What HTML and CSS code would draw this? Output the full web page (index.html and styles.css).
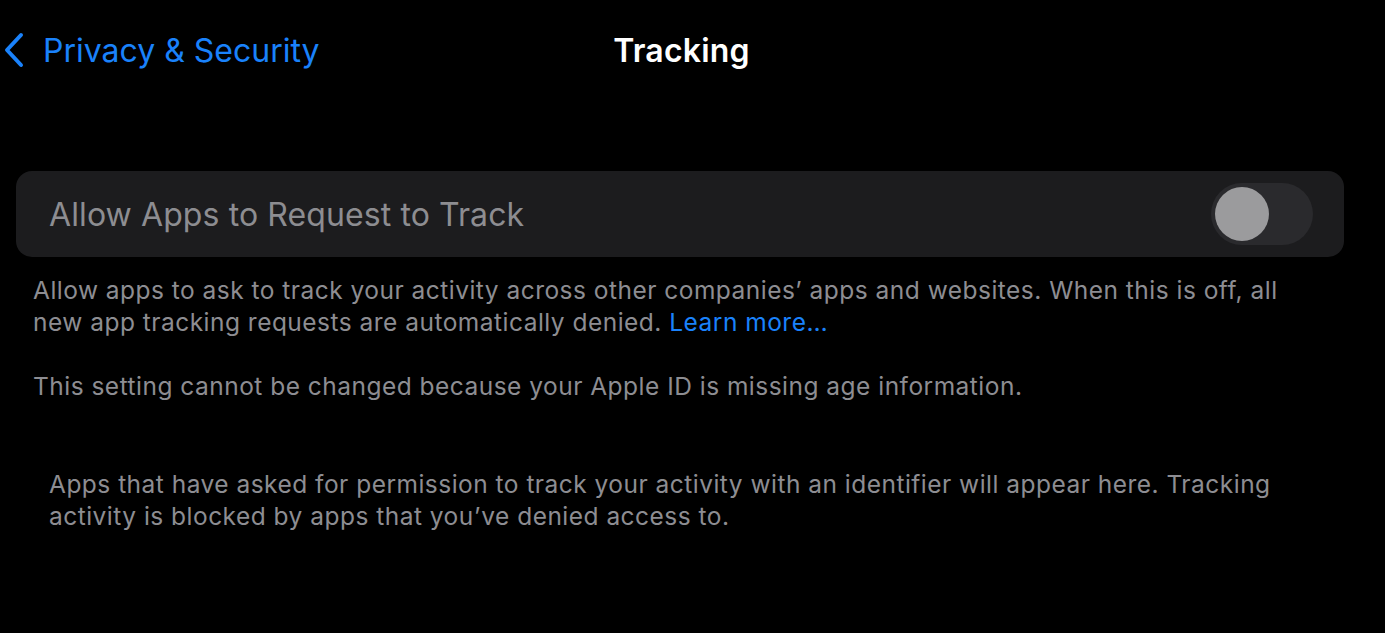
FILE: index.html
```html
<!DOCTYPE html>
<html>
<head>
<meta charset="utf-8">
<link rel="stylesheet" href="styles.css">
</head>
<body>
<div class="screen">
  <header class="nav">
    <a class="back">
      <svg class="chev" width="22" height="36" viewBox="0 0 22 36"><path d="M18 3 L4 18 L18 33" fill="none" stroke="#1a82fb" stroke-width="4" stroke-linecap="round" stroke-linejoin="round"/></svg>
      <span class="back-label">Privacy &amp; Security</span>
    </a>
    <h1 class="title">Tracking</h1>
  </header>

  <section class="group">
    <div class="card">
      <span class="row-label">Allow Apps to Request to Track</span>
      <span class="toggle"><span class="knob"></span></span>
    </div>
    <div class="footnote">
      <p class="note">Allow apps to ask to track your activity across other companies’ apps and websites. When this is off, all new app tracking requests are automatically denied. <a class="link">Learn more…</a></p>
      <p class="note note-gap">This setting cannot be changed because your Apple ID is missing age information.</p>
    </div>
  </section>

  <p class="empty">Apps that have asked for permission to track your activity with an identifier will appear here. Tracking activity is blocked by apps that you’ve denied access to.</p>
</div>
</body>
</html>
```
FILE: styles.css
```css
html, body {
  margin: 0;
  padding: 0;
  background: #000;
}
body {
  font-family: Inter, "Noto Sans", sans-serif;
  color: #fff;
  width: 1385px;
  height: 633px;
  overflow: hidden;
}
.screen {
  display: flex;
  flex-direction: column;
}
.nav {
  position: relative;
  height: 100px;
  display: flex;
  align-items: center;
}
.back {
  display: flex;
  align-items: center;
  gap: 18px;
  padding-left: 3px;
  color: #1a82fb;
  font-size: 32px;
  letter-spacing: 0;
}
.chev {
  display: block;
}
.title {
  position: absolute;
  left: 0;
  right: 0;
  top: 0;
  height: 100px;
  margin: 0;
  display: flex;
  align-items: center;
  justify-content: center;
  padding-right: 22px;
  font-size: 32px;
  font-weight: 600;
  letter-spacing: 0.2px;
  pointer-events: none;
}
.group {
  margin-top: 71px;
  padding: 0 41px 0 16px;
}
.card {
  height: 86px;
  background: #1c1c1e;
  border-radius: 16px;
  display: flex;
  align-items: center;
  justify-content: space-between;
  padding: 0 31px 0 33px;
}
.row-label {
  font-size: 32px;
  color: #8d8d91;
  letter-spacing: 0.1px;
}
.toggle {
  width: 102px;
  height: 62px;
  border-radius: 31px;
  background: #2a2a2d;
  display: flex;
  align-items: center;
  padding-left: 4px;
  box-sizing: border-box;
}
.knob {
  width: 54px;
  height: 54px;
  border-radius: 50%;
  background: #9b9b9d;
}
.footnote {
  padding: 17px 0 0 17px;
}
.note {
  margin: 0;
  font-size: 24.5px;
  line-height: 32px;
  color: #8d8d92;
  letter-spacing: 0.48px;
  max-width: 1262px;
}
.note-gap {
  margin-top: 32px;
}
.link {
  color: #1a82fb;
}
.empty {
  margin: 66px 0 0 49px;
  max-width: 1245px;
  font-size: 24.5px;
  line-height: 32px;
  color: #8d8d92;
  letter-spacing: 0.48px;
}
```
